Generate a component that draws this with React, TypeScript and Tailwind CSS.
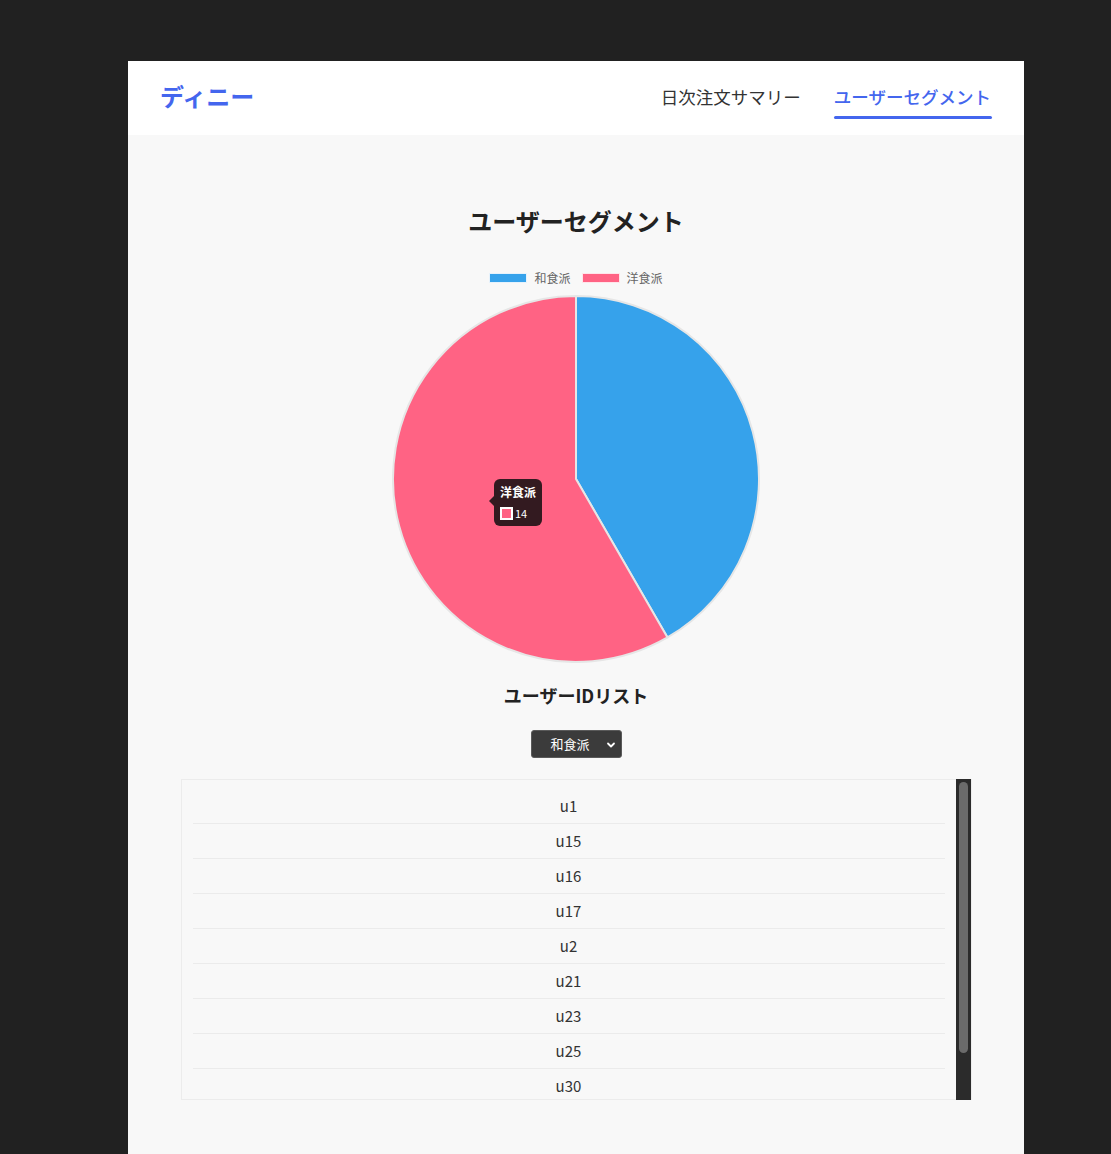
import React from 'react';

const userIds = ['u1', 'u15', 'u16', 'u17', 'u2', 'u21', 'u23', 'u25', 'u30'];

function SegmentPie() {
  // 和食派 10 / 洋食派 14 -> blue slice ends at 150deg
  const cx = 184;
  const cy = 184;
  const r = 183;
  const end = (10 / 24) * Math.PI * 2;
  const ex = cx + r * Math.sin(end);
  const ey = cy - r * Math.cos(end);
  return (
    <div className="relative w-[368px] h-[368px]">
      <svg width="368" height="368" viewBox="0 0 368 368">
        <path d={`M${cx},${cy} L${cx},${cy - r} A${r},${r} 0 0 1 ${ex},${ey} Z`} fill="#36a2eb" stroke="#e6e6e6" strokeWidth="2" strokeLinejoin="round" />
        <path d={`M${cx},${cy} L${ex},${ey} A${r},${r} 0 1 1 ${cx},${cy - r} Z`} fill="#ff6384" stroke="#e6e6e6" strokeWidth="2" strokeLinejoin="round" />
      </svg>
      {/* Hover tooltip */}
      <div className="absolute left-[102px] top-[184px] w-[48px] h-[47px] rounded-[6px] bg-[#331a20] px-[6px] pt-[5px]">
        <div className="absolute left-[-5px] top-[17px] w-0 h-0 border-y-[5px] border-y-transparent border-r-[5px] border-r-[#331a20]" />
        <div className="text-[12px] font-bold text-white leading-[16px]">洋食派</div>
        <div className="flex items-center mt-[6px]">
          <span className="w-[13px] h-[13px] border-2 border-white bg-[#ff6384]" />
          <span className="text-[11px] text-white leading-[14px] ml-[2px]">14</span>
        </div>
      </div>
    </div>
  );
}

export default function App() {
  return (
    <div className="min-h-[1154px] bg-[#212121] pt-[61px] font-['Noto_Sans_CJK_JP','Noto_Sans',sans-serif]">
      <div className="ml-[128px] w-[896px] min-h-[1093px] bg-[#f8f8f8]">
        {/* Header */}
        <header className="h-[74px] bg-white flex items-center justify-between pl-8 pr-[33px]">
          <div className="text-[24px] font-bold text-[#4466ee] leading-[32px] mb-[5px]">ディニー</div>
          <nav className="flex items-center gap-[33px] mb-[2px]">
            <span className="text-[17.5px] text-[#333] leading-[24px]">日次注文サマリー</span>
            <span className="relative text-[17.5px] font-medium text-[#4466ee] leading-[24px]">
              ユーザーセグメント
              <span className="absolute left-0 right-[-1px] top-[31px] h-[3px] rounded-full bg-[#4466ee]" />
            </span>
          </nav>
        </header>

        {/* Body */}
        <main className="flex flex-col items-center pt-[69px]">
          <h1 className="text-[24px] font-bold text-[#222] leading-[34px]">ユーザーセグメント</h1>

          <div className="flex items-center gap-[7px] mt-[33px] h-[14px] text-[12px] text-[#666]">
            <span className="w-[38px] h-[10px] bg-[#36a2eb] border border-[#e6f2fc]" />
            <span className="mr-[4px]">和食派</span>
            <span className="w-[38px] h-[10px] bg-[#ff6384] border border-[#ffe5ea]" />
            <span>洋食派</span>
          </div>

          <div className="mt-[10px]">
            <SegmentPie />
          </div>

          <h2 className="mt-[18px] text-[18px] font-bold text-[#222] leading-[28px]">ユーザーIDリスト</h2>

          <div className="mt-[21px] relative w-[91px] h-[28px] rounded-[3px] bg-[#3b3b3b] border border-[#5a5a5a] flex items-center">
            <span className="flex-1 text-center text-[13px] text-white pr-[12px]">和食派</span>
            <svg className="absolute right-[5px] top-[9px]" width="10" height="10" viewBox="0 0 10 10">
              <path d="M2 3.5 L5 6.5 L8 3.5" fill="none" stroke="white" strokeWidth="1.8" strokeLinecap="round" strokeLinejoin="round" />
            </svg>
          </div>

          {/* User ID list */}
          <div className="mt-[21px] w-[791px] h-[321px] border border-[#ececec] flex">
            <div className="flex-1 overflow-hidden pt-[9px] px-[11px]">
              {userIds.map((id) => (
                <div key={id} className="h-[35px] flex items-center justify-center border-b border-[#ebebeb] text-[15px] text-[#333]">
                  {id}
                </div>
              ))}
            </div>
            <div className="w-[15px] bg-[#2b2b2b] pt-[3px] px-[3px] mt-[-1px] mb-[-1px]">
              <div className="h-[271px] rounded-full bg-[#6b6b6b]" />
            </div>
          </div>
        </main>
      </div>
    </div>
  );
}
